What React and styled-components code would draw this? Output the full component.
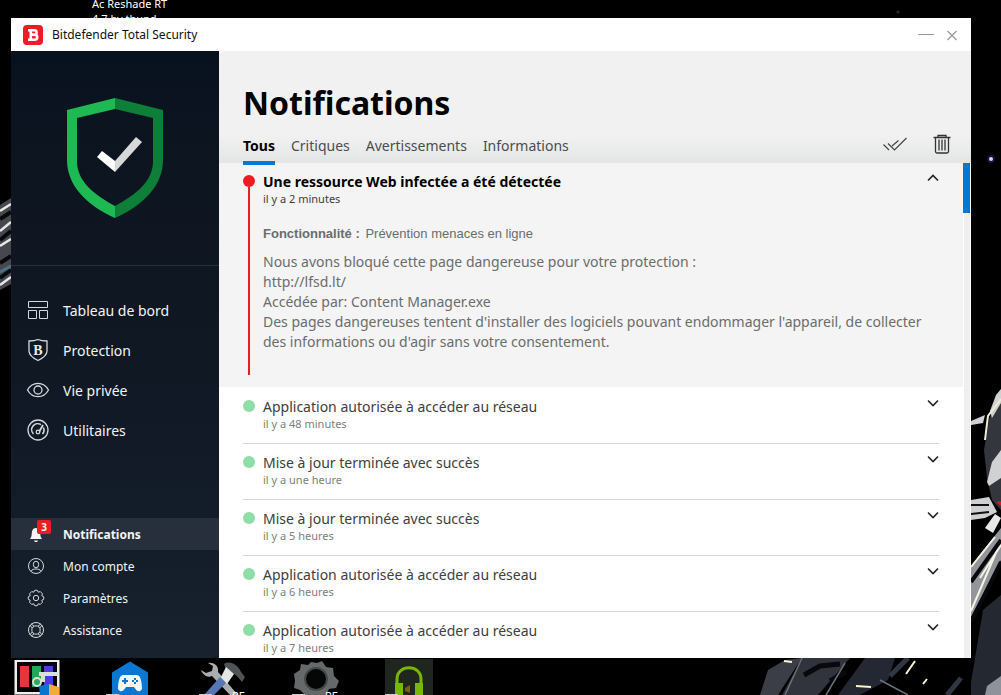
import React from 'react';
import styled, { createGlobalStyle } from 'styled-components';

const GlobalStyle = createGlobalStyle`
  * {
    box-sizing: border-box;
  }

  body {
    margin: 0;
    background: #000;
    font-family: 'Noto Sans', 'Open Sans', sans-serif;
  }

  button {
    padding: 0;
    border: 0;
    background: none;
    color: inherit;
    font: inherit;
    text-align: left;
    cursor: pointer;
  }

  svg {
    display: block;
    flex-shrink: 0;
  }
`;

const Desktop = styled.div`
  position: relative;
  display: flex;
  flex-direction: column;
  height: 100vh;
  padding: 18px 30px 0 11px;
  overflow: hidden;
  background: #000;
`;

const Wallpaper = styled.svg`
  position: absolute;
  width: 100%;
  height: 100%;
  top: 0;
  left: 0;
`;

const ShortcutLabel = styled.span`
  position: absolute;
  top: -4px;
  left: 92px;
  color: #fff;
  font-size: 11px;
  line-height: 15px;
  white-space: pre-line;
`;

const Window = styled.div`
  position: relative;
  display: flex;
  flex: 1;
  flex-direction: column;
  min-height: 0;
  background: #fff;
`;

const TitleBar = styled.header`
  display: flex;
  align-items: center;
  height: 33px;
  padding: 0 13px 0 12px;
  gap: 9px;
  font-size: 12px;
  color: #111;
`;

const Logo = styled.span`
  display: flex;
  align-items: center;
  justify-content: center;
  width: 20px;
  height: 20px;
  border-radius: 4px;
  background: #ed1c24;
`;

const WindowButtons = styled.div`
  display: flex;
  align-items: center;
  gap: 12px;
  margin-left: auto;
`;

const Body = styled.div`
  display: flex;
  flex: 1;
  min-height: 0;
`;

const Sidebar = styled.aside`
  display: flex;
  flex-direction: column;
  flex-shrink: 0;
  width: 208px;
  padding-bottom: 12px;
  background: linear-gradient(#08121e 0%, #0f1621 30%, #101925 60%, #17222e 100%);
  color: #f2f4f5;
`;

const Status = styled.div`
  display: flex;
  justify-content: center;
  height: 215px;
  padding-top: 46px;
  border-bottom: 1px solid #25313d;
`;

const Nav = styled.nav`
  display: flex;
  flex-direction: column;
  padding-top: ${props => (props.$small ? '0' : '24px')};
  margin-top: ${props => (props.$small ? 'auto' : '0')};
`;

const NavItem = styled.button`
  position: relative;
  display: flex;
  align-items: center;
  height: ${props => (props.$small ? '32px' : '40px')};
  padding-left: 16px;
  gap: ${props => (props.$small ? '18px' : '14px')};
  font-size: ${props => (props.$small ? '12px' : '14px')};
  font-weight: ${props => (props.$active ? 700 : 400)};
  background: ${props => (props.$active ? '#262f3b' : 'transparent')};

  svg {
    width: ${props => (props.$small ? '18px' : '22px')};
    height: ${props => (props.$small ? '18px' : '22px')};
    fill: none;
    stroke: #d5d9dc;
    overflow: visible;
  }
`;

const Badge = styled.span`
  position: absolute;
  top: 2px;
  left: 26px;
  width: 14px;
  height: 14px;
  border-radius: 2px;
  background: #ed1c24;
  font-size: 10px;
  font-weight: 700;
  line-height: 14px;
  text-align: center;
`;

const Main = styled.main`
  display: flex;
  flex: 1;
  flex-direction: column;
  min-width: 0;
`;

const Header = styled.div`
  padding: 28px 20px 0 24px;
  height: 112px;
  flex-shrink: 0;
  background: linear-gradient(#f1f1f1 75%, #e3e5e5 100%);
`;

const Title = styled.h1`
  margin: 0;
  color: #000;
  font-size: 32px;
  font-weight: 700;
  line-height: 48px;
`;

const Toolbar = styled.div`
  display: flex;
  align-items: flex-start;
  justify-content: space-between;
`;

const Tabs = styled.div`
  display: flex;
  gap: 16px;
`;

const Tab = styled.button`
  position: relative;
  z-index: 1;
  height: 38px;
  padding-top: 4px;
  border-bottom: 4px solid ${props => (props.$active ? '#0078d4' : 'transparent')};
  color: ${props => (props.$active ? '#000' : '#4a4d4d')};
  font-size: 14px;
  font-weight: ${props => (props.$active ? 700 : 400)};
  line-height: 30px;
`;

const Actions = styled.div`
  display: flex;
  align-items: center;
  gap: 26px;
  padding-top: 7px;
`;

const Scroller = styled.div`
  display: flex;
  flex: 1;
  min-height: 0;
`;

const List = styled.div`
  flex: 1;
  min-width: 0;
  overflow: hidden;
`;

const Track = styled.div`
  width: 8px;
  padding-right: 1px;
  background: linear-gradient(90deg, #fff 1px, #efefef 1px 7px, #fff 7px);
`;

const Thumb = styled.div`
  height: 50px;
  background: #0078d4;
`;

const Alert = styled.article`
  display: flex;
  gap: 8px;
  height: 224px;
  padding: 9px 24px 12px;
  background: #f4f4f4;
`;

const Timeline = styled.div`
  display: flex;
  flex-direction: column;
  align-items: center;
  width: 12px;
  padding-top: 3px;

  &::after {
    content: '';
    flex: 1;
    width: 2px;
    background: #ed1c24;
  }
`;

const Dot = styled.span`
  width: 12px;
  height: 12px;
  flex-shrink: 0;
  border-radius: 50%;
  background: ${props => props.$color};
`;

const Content = styled.div`
  flex: 1;
  min-width: 0;
`;

const Summary = styled.div`
  display: flex;
  justify-content: space-between;
`;

const Heading = styled.h2`
  margin: 0;
  color: ${props => (props.$strong ? '#000' : '#3c403f')};
  font-size: 14px;
  font-weight: ${props => (props.$strong ? 700 : 400)};
  line-height: 20px;
`;

const Time = styled.div`
  color: ${props => (props.$strong ? '#3c403f' : '#7b7f7e')};
  font-size: 11px;
  line-height: 14px;
`;

const Feature = styled.p`
  margin: 18px 0 8px;
  color: #6a6d6d;
  font-family: 'Liberation Sans', Arial, sans-serif;
  font-size: 13px;
  line-height: 20px;

  b {
    margin-right: 2px;
  }
`;

const Message = styled.p`
  margin: 0;
  color: #6a6d6d;
  font-size: 14px;
  line-height: 20px;
  white-space: pre-line;
`;

const Row = styled.article`
  display: flex;
  gap: 8px;
  height: 56px;
  margin: 0 24px;
  padding-top: 9px;
  border-top: 1px solid #d4d6d6;

  &:nth-child(2) {
    border-color: transparent;
  }

  ${Dot} {
    margin-top: 3px;
  }
`;

const Toggle = styled.button`
  display: flex;
  width: 12px;
  height: 12px;
`;

const Shortcuts = styled.div`
  position: relative;
  display: flex;
  height: 37px;
  flex-shrink: 0;
  gap: 45px;
  overflow: hidden;
`;

const Chevron = ({ up }) => (
  <svg width="12" height="12" viewBox="0 0 12 12" fill="none" stroke="#222" strokeWidth="1.6">
    <path d={up ? 'M1 8.500 6 3.500 11 8.500' : 'M1 3.500 6 8.500 11 3.500'} />
  </svg>
);

const mainNav = [
  {
    label: 'Tableau de bord',
    icon: (
      <svg viewBox="0 0 22 22">
        <path d="M1.500 2.500h19v6h-19zM1.500 11.500h8v8h-8zM12.500 11.500h8v8h-8z" />
      </svg>
    ),
  },
  {
    label: 'Protection',
    icon: (
      <svg viewBox="0 0 22 22" strokeWidth="1.3">
        <path d="M11 .5c3 1.300 6 1.500 9 1.500v10c0 4-4 7-9 9.500-5-2.500-9-5.500-9-9.500V2c3 0 6-.2 9-1.500z" />
        <text x="11" y="15.500" textAnchor="middle" fill="#e8eaec" stroke="none" fontFamily="Liberation Serif, serif" fontWeight="700" fontSize="14">
          B
        </text>
      </svg>
    ),
  },
  {
    label: 'Vie privée',
    icon: (
      <svg viewBox="0 0 22 22" strokeWidth="1.3">
        <path d="M.5 11C3 6.500 6.500 4.300 11 4.300S19 6.500 21.500 11C19 15.500 15.500 17.700 11 17.700S3 15.500.5 11z" />
        <circle cx="11" cy="11" r="4" />
      </svg>
    ),
  },
  {
    label: 'Utilitaires',
    icon: (
      <svg viewBox="0 0 22 22" strokeWidth="1.3">
        <circle cx="11" cy="11" r="10" />
        <path d="M6.500 15A6 6 0 0 1 14 5.700M16.400 8.500a6 6 0 0 1-.9 6.500" strokeWidth="1.600" />
        <path d="M16 6 12.300 12.500" strokeWidth="1.800" />
        <circle cx="11" cy="13" r="1.800" />
      </svg>
    ),
  },
];

const gearPath =
  'M7.500 1.500Q9 .8 10.500 1.500L11.200 3.200 13.300 2.600 15.400 4.700 14.800 6.800 16.500 7.500Q17.200 9 16.500 10.500L14.800 11.200 15.400 13.300 13.300 15.400 11.200 14.800 10.500 16.500Q9 17.200 7.500 16.500L6.800 14.800 4.700 15.400 2.600 13.300 3.200 11.200 1.500 10.500Q.8 9 1.500 7.500L3.200 6.800 2.600 4.700 4.700 2.600 6.800 3.200z';

const accountNav = [
  {
    label: 'Notifications',
    badge: 3,
    icon: (
      <svg viewBox="0 0 18 18">
        <path d="M3 14c2-2 1.500-5 2-7.500C5.500 4 7 3 9 3s3.500 1 4 3.500c.5 2.500 0 5.500 2 7.500zM7 15.500h4c-.5 2-3.500 2-4 0z" fill="#f2f4f5" stroke="none" />
      </svg>
    ),
  },
  {
    label: 'Mon compte',
    icon: (
      <svg viewBox="0 0 18 18">
        <circle cx="9" cy="9" r="7.500" />
        <ellipse cx="9" cy="7.500" rx="2.700" ry="3.300" />
        <path d="M4 14.500c1-2.300 3-2.500 5-2.500s4 .2 5 2.500" />
      </svg>
    ),
  },
  {
    label: 'Paramètres',
    icon: (
      <svg viewBox="0 0 18 18">
        <path d={gearPath} strokeLinejoin="round" />
        <circle cx="9" cy="9" r="2.700" />
      </svg>
    ),
  },
  {
    label: 'Assistance',
    icon: (
      <svg viewBox="0 0 18 18">
        <circle cx="9" cy="9" r="7.500" />
        <circle cx="9" cy="9" r="4.200" />
        <path d="M4 2.800 7 5.200M2.800 4 5.200 7M14 2.800 11 5.200M15.200 4 12.800 7M4 15.200 7 12.800M2.800 14 5.200 11M14 15.200 11 12.800M15.200 14 12.800 11" />
      </svg>
    ),
  },
];

const tabs = ['Tous', 'Critiques', 'Avertissements', 'Informations'];

const events = [
  { title: 'Application autorisée à accéder au réseau', time: 'il y a 48 minutes' },
  { title: 'Mise à jour terminée avec succès', time: 'il y a une heure' },
  { title: 'Mise à jour terminée avec succès', time: 'il y a 5 heures' },
  { title: 'Application autorisée à accéder au réseau', time: 'il y a 6 heures' },
  { title: 'Application autorisée à accéder au réseau', time: 'il y a 7 heures' },
];

const message = `Nous avons bloqué cette page dangereuse pour votre protection :
http://lfsd.lt/
Accédée par: Content Manager.exe
Des pages dangereuses tentent d'installer des logiciels pouvant endommager l'appareil, de collecter des informations ou d'agir sans votre consentement.`;

const Background = () => (
  <Wallpaper viewBox="0 0 1001 695" preserveAspectRatio="xMaxYMax slice" aria-hidden="true">
    {/* left edge */}
    <path d="M0 205 11 198V284L0 290z" fill="#464850" />
    <path d="M0 211 11 204M0 231 11 222M0 246 11 239M0 285 11 277" stroke="#e8e8e4" strokeWidth="2.500" />
    <path d="M0 219 11 212M0 240 11 231M0 263 11 256M0 278 11 270" stroke="#08090c" strokeWidth="4" />
    <path d="M0 272 11 266" stroke="#4e7183" strokeWidth="3" />
    {/* right edge */}
    <circle cx="898" cy="12" r="1.500" fill="#1d2a40" />
    <circle cx="991" cy="159" r="4" fill="#101538" />
    <circle cx="991" cy="159" r="2" fill="#cfd6ff" />
    <path d="M1001 390 989 420 984 450 987 478 992 500 1001 510z" fill="#33363d" />
    <path d="M990 411 996 395 1001 389V403L992 418zM971 421l14-6-2 8-12 2zM987 482l5-20 9-12v28l-12 8zM971 500l18-3 8 15-12 6-14 2z" fill="#d0d1d3" />
    <path d="M971 505h18M971 514l18-2" stroke="#111" strokeWidth="2" />
    <path d="M985 440 988 416 1001 399" fill="none" stroke="#ededd5" strokeWidth="2" />
    <path d="M996 502l5-1v5z" fill="#c61d26" />
    <path d="M985 528 995 514 1001 518 993 533z" fill="#e8e8e8" />
    <path d="M971 566 1001 528V560L971 617z" fill="#93959a" />
    <path d="M971 567 995 537M971 611 1001 541M980 578 1001 545" stroke="#f4f4e8" strokeWidth="2" />
    <path d="M971 582 1001 540M971 622 1001 562" stroke="#08090c" strokeWidth="4" />
    <path d="M983 610 1001 595V695H971V682z" fill="#242831" />
    <path d="M987 686 1001 676V695H985z" fill="#8f929b" />
    {/* under the window */}
    <path d="M760 695 768 670 785 660 802 658 778 695z" fill="#3b3d47" />
    <path d="M782 695 802 658H850L818 695z" fill="#31343d" />
    <path d="M838 695 865 658H895L888 680 860 695z" fill="#242832" />
    <path d="M804 675 820 666 840 664M830 681 846 672" fill="none" stroke="#08090c" strokeWidth="5" />
    <path d="M785 695 802 658M826 695 845 663M880 680 908 695" stroke="#687076" strokeWidth="1.500" />
    <path d="M784 661l8 1M856 686l15 1M906 674l9-13M923 684l4-5" stroke="#f5f5cf" strokeWidth="2" />
    <path d="M890 676 908 658M947 695 961 678" stroke="#303743" strokeWidth="5" />
  </Wallpaper>
);

const Shield = () => (
  <svg width="98" height="122" viewBox="0 0 98 122">
    <path d="M49 1V12L11 21V64C11 84 27 97 49 109V121C20 108 1 88 1 63V13z" fill="#1fb954" />
    <path d="M49 1V12L87 21V64C87 84 71 97 49 109V121C78 108 97 88 97 63V13z" fill="#0e7f38" />
    <path d="M31 60 36 54 49 64V75z" fill="#fff" />
    <path d="M49 64 70 40 76 45 49 75z" fill="#d8d8d8" />
  </svg>
);

const DesktopShortcuts = () => (
  <Shortcuts>
    <svg width="50" height="37" viewBox="11 658 50 37">
      <path d="M14 660h46v35H14z" fill="#777" />
      <path d="M16 661h42v32H16z" fill="#050505" stroke="#eee" strokeWidth="2" />
      <path d="M20 666h9v21h-9z" fill="#e9343d" />
      <path d="M32 666h9v21h-9z" fill="#24a65b" />
      <path d="M44 666h9v21h-9z" fill="#4c3ce0" />
      <path d="M39 674h19M43 674v8" fill="none" stroke="#d7dede" strokeWidth="4" />
      <circle cx="37" cy="682" r="4" fill="#2faa59" stroke="#ddd" strokeWidth="2" />
      <path d="M39 686 49 684V695H40z" fill="#0876cd" />
      <path d="M49 684 59 687V695H49z" fill="#f3ac37" />
    </svg>
    <svg width="48" height="37" viewBox="106 658 48 37">
      <path d="M130 661.500 148 672.500V695H112V672.500z" fill="#0a78d3" />
      <path d="M123 675h14c4 0 5 9 5 14-3 5-6 1-8-2h-8c-2 3-5 7-8 2 0-5 1-14 5-14z" fill="#f2f5f9" />
      <path d="M125 678v6M122 681h6" stroke="#0a78d3" strokeWidth="2" />
      <path d="M135 678v2M135 682v2M132 681h2M136 681h2" stroke="#0a78d3" strokeWidth="2" />
      <path d="M106 694h13v1h-13z" fill="#ccc" />
    </svg>
    <svg width="48" height="37" viewBox="199 658 48 37">
      <path d="M201 670l5 3 6-2 1-5-5-3c7-1 11 4 10 9l20 23h-8l-18-19c-5 2-9-1-11-6z" fill="#a9adb0" />
      <path d="M224 664c6-4 14 1 17 8l4 5-3 5-4-5c-3-2-5-5-8-4l-4-3z" fill="#515457" />
      <path d="M226 667 234 674 227 684 221 677z" fill="#e5e5e5" />
      <path d="M220 677 226 683 214 695H204z" fill="#5578b5" />
      <path d="M199 694h13v1h-13z" fill="#ccc" />
      <text x="232" y="700" fill="#fff" fontFamily="Noto Sans, sans-serif" fontSize="11">RE</text>
    </svg>
    <svg width="48" height="37" viewBox="292 658 48 37">
      <path d="M311 662l6 1 5-2 4 6 7 1 1 8 5 5-3 7-7 1-3 6h-21l-5-5-6-2 1-7-1-7 6-4 1-6 7 1z" fill="#666969" />
      <circle cx="316" cy="679" r="11" fill="#050606" stroke="#45494a" strokeWidth="2" />
      <path d="M292 694h13v1h-13z" fill="#ccc" />
      <text x="325" y="700" fill="#fff" fontFamily="Noto Sans, sans-serif" fontSize="11">RE</text>
    </svg>
    <svg width="48" height="37" viewBox="385 658 48 37">
      <path d="M385 659h48v36h-48z" fill="#1e261f" />
      <path d="M397 686v-7c0-15 24-15 24 0v7" fill="none" stroke="#78b900" strokeWidth="3" />
      <path d="M395 683h8v12h-8zM415 683h8v12h-8z" fill="#78b900" />
      <path d="M405 688l5-3v8l-5-2z" fill="#766014" />
      <path d="M385 694h13v1h-13z" fill="#ccc" />
    </svg>
  </Shortcuts>
);

const App = () => (
  <Desktop>
    <GlobalStyle />
    <Background />
    <ShortcutLabel>{'Ac Reshade RT\n4.7 by thund...'}</ShortcutLabel>
    <Window>
      <TitleBar>
        <Logo>
          <svg width="20" height="20" viewBox="0 0 20 20" fill="none" stroke="#fff" strokeWidth="2.600">
            <path d="M5 5.300h6c3.500 0 3.500 4.300 0 4.300H8.300M11 9.600c4.300 0 4.300 5.100 0 5.100H5M7.800 5.300v9.400" />
          </svg>
        </Logo>
        <span>Bitdefender Total Security</span>
        <WindowButtons>
          <button type="button" aria-label="Réduire">
            <svg width="16" height="16" viewBox="0 0 16 16" stroke="#999">
              <path d="M0 7.500h16" />
            </svg>
          </button>
          <button type="button" aria-label="Fermer">
            <svg width="12" height="12" viewBox="0 0 12 12" stroke="#999" strokeWidth="1.200">
              <path d="M1.500 2 10.500 11M10.500 2 1.500 11" />
            </svg>
          </button>
        </WindowButtons>
      </TitleBar>
      <Body>
        <Sidebar>
          <Status>
            <Shield />
          </Status>
          <Nav>
            {mainNav.map(item => (
              <NavItem key={item.label} type="button">
                {item.icon}
                {item.label}
              </NavItem>
            ))}
          </Nav>
          <Nav $small>
            {accountNav.map(item => (
              <NavItem key={item.label} type="button" $small $active={Boolean(item.badge)}>
                {item.icon}
                {item.label}
                {item.badge && <Badge>{item.badge}</Badge>}
              </NavItem>
            ))}
          </Nav>
        </Sidebar>
        <Main>
          <Header>
            <Title>Notifications</Title>
            <Toolbar>
              <Tabs>
                {tabs.map((tab, i) => (
                  <Tab key={tab} type="button" $active={i === 0}>
                    {tab}
                  </Tab>
                ))}
              </Tabs>
              <Actions>
                <button type="button" aria-label="Tout marquer comme lu">
                  <svg width="24" height="20" viewBox="0 0 24 20" fill="none" stroke="#444">
                    <path d="M.5 10.500 6 16M5 9.500 11.500 16 23.500 4M9 12 15.500 6.500" strokeWidth="1.200" />
                  </svg>
                </button>
                <button type="button" aria-label="Supprimer">
                  <svg width="18" height="20" viewBox="0 0 18 20" fill="none" stroke="#333" strokeWidth="1.300">
                    <path d="M.5 3.500h17M5 3V1.500h8V3M2.500 4v13.500q0 1.500 1.500 1.500h10q1.500 0 1.500-1.500V4M6 5.500v11M9 5.500v11M12 5.500v11" />
                  </svg>
                </button>
              </Actions>
            </Toolbar>
          </Header>
          <Scroller>
            <List>
              <Alert>
                <Timeline>
                  <Dot $color="#ed1c24" />
                </Timeline>
                <Content>
                  <Summary>
                    <div>
                      <Heading $strong>Une ressource Web infectée a été détectée</Heading>
                      <Time $strong>il y a 2 minutes</Time>
                    </div>
                    <Toggle type="button" aria-label="Masquer les détails">
                      <Chevron up />
                    </Toggle>
                  </Summary>
                  <Feature>
                    <b>Fonctionnalité :</b> Prévention menaces en ligne
                  </Feature>
                  <Message>{message}</Message>
                </Content>
              </Alert>
              {events.map(event => (
                <Row key={event.time}>
                  <Dot $color="#8fdda7" />
                  <Content>
                    <Heading>{event.title}</Heading>
                    <Time>{event.time}</Time>
                  </Content>
                  <Toggle type="button" aria-label="Afficher les détails">
                    <Chevron />
                  </Toggle>
                </Row>
              ))}
            </List>
            <Track>
              <Thumb />
            </Track>
          </Scroller>
        </Main>
      </Body>
    </Window>
    <DesktopShortcuts />
  </Desktop>
);

export default App;
